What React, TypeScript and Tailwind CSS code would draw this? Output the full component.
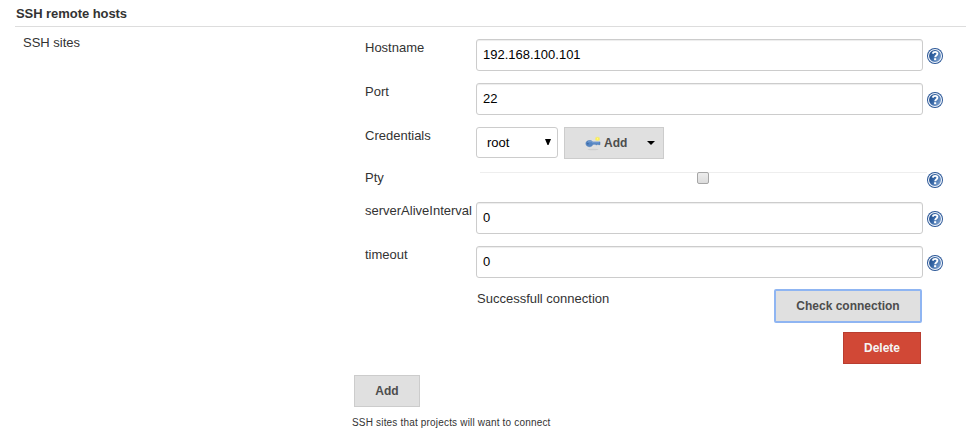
import React from "react";

function HelpIcon() {
  return (
    <svg width="16" height="16" viewBox="0 0 16 16" className="block shrink-0">
      <defs>
        <linearGradient id="help" x1="0" y1="0.2" x2="1" y2="0.8">
          <stop offset="0" stopColor="#204a87" />
          <stop offset="0.4" stopColor="#3465a4" />
          <stop offset="1" stopColor="#86a9d6" />
        </linearGradient>
      </defs>
      <circle cx="8" cy="8" r="8" fill="#2b5797" />
      <circle cx="8" cy="8" r="6.5" fill="url(#help)" stroke="#f0f4fa" strokeWidth="1.1" />
      <path
        d="M5.6 5.6C6 4.4 7 3.9 8.1 3.9c1.4 0 2.3.8 2.3 1.9 0 1.7-2.2 1.7-2.2 3.4"
        fill="none"
        stroke="#fff"
        strokeWidth="1.9"
      />
      <rect x="7.1" y="10.2" width="2.1" height="2" fill="#fff" />
    </svg>
  );
}

function KeyIcon() {
  return (
    <svg width="16" height="16" viewBox="0 0 16 16" className="block shrink-0">
      <defs>
        <radialGradient id="glow">
          <stop offset="0" stopColor="#fffcc0" />
          <stop offset="0.4" stopColor="#fff34d" />
          <stop offset="1" stopColor="#f7e94a" stopOpacity="0.4" />
        </radialGradient>
      </defs>
      <ellipse cx="8" cy="14.5" rx="5.5" ry="0.7" fill="#cfcfcf" />
      <path
        d="M4.5 5.5c1.5 0 2.6.5 3.2 1.400h7.300v2.800h-1.500v-.5h-1.300v.6h-1.400v-.5H8c-.5 1.500-1.800 2.400-3.500 2.400C2.300 11.700.9 10.400.9 8.600S2.300 5.500 4.500 5.500z"
        fill="#5585c2"
        stroke="#4576b4"
        strokeWidth="0.5"
      />
      <path d="M3 6.700h3.800l1 1.100h6.400" stroke="#7fa6d8" strokeWidth="0.8" fill="none" />
      <circle cx="2.900" cy="8.700" r="0.7" fill="#2f5a94" />
      <rect x="10" y="1.800" width="5" height="4.200" rx="1.500" fill="url(#glow)" />
    </svg>
  );
}

function Row({ label, className, labelClass = "pt-px", children }: {
  label: string;
  className: string;
  labelClass?: string;
  children: React.ReactNode;
}) {
  return (
    <div className={`flex items-start ${className}`}>
      <label className={`w-[111px] shrink-0 whitespace-nowrap leading-4 ${labelClass}`}>{label}</label>
      {children}
    </div>
  );
}

function TextField({ label, value }: { label: string; value: string }) {
  return (
    <Row label={label} className="h-11">
      <input
        defaultValue={value}
        className="h-8 w-[447px] rounded-[3px] border border-[#ccc] bg-white px-1.5 pb-0.5 text-black shadow-[inset_0_1px_1px_rgba(0,0,0,0.075)] outline-none"
      />
      <div className="ml-1 mt-[9px]"><HelpIcon /></div>
    </Row>
  );
}

export default function App() {
  return (
    <main className="h-[433px] w-[966px] overflow-hidden bg-white font-['Liberation_Sans',Arial,sans-serif] text-[13px] text-[#333]">
      <h1 className="ml-[15px] h-[27px] border-b border-[#ddd] pl-px pt-1.5 font-bold leading-4 tracking-[-0.06px]">SSH remote hosts</h1>
      <div className="flex">
        <div className="w-[352px] shrink-0 pl-[23px] pt-2 leading-4">SSH sites</div>
        <section className="flex-1 pt-3">
          <div className="pl-[13px]">
            <TextField label="Hostname" value="192.168.100.101" />
            <TextField label="Port" value="22" />
            <Row label="Credentials" className="h-[45px]">
              <button className="flex h-[31px] w-[82px] items-center justify-between rounded-[3px] border border-[#ccc] bg-white pl-2.5 pr-1.5 text-black">
                <span>root</span>
                <svg width="6" height="6" viewBox="0 0 6 6" className="mb-0.5"><path d="M0 0h6L3.5 6h-1z" fill="#000" /></svg>
              </button>
              <button className="ml-1.5 flex h-8 w-[100px] items-center border border-[#ccc] bg-[#e0e0e0] pl-5 text-xs font-bold text-[#4d4d4d]">
                <KeyIcon />
                <span className="ml-[3px]">Add</span>
                <svg width="8" height="4" viewBox="0 0 8 4" className="ml-5"><path d="M0 0h8L4 4z" fill="#000" /></svg>
              </button>
            </Row>
            <Row label="Pty" className="h-[30px]" labelClass="-mt-0.5">
              <div className="ml-1 flex h-3 w-[447px] items-start justify-center border-t border-[#eee] pr-px">
                <input type="checkbox" className="-mt-px size-3 appearance-none rounded-[2px] border border-[#a6a6a6] bg-linear-to-b from-[#ededed] to-[#dcdcdc]" />
              </div>
              <HelpIcon />
            </Row>
            <TextField label="serverAliveInterval" value="0" />
            <TextField label="timeout" value="0" />
            <div className="-mt-px flex h-[43px] w-[557px] items-start justify-between pl-28">
              <span className="pt-0.5 leading-4">Successfull connection</span>
              <button className="h-[34px] w-[148px] rounded-[2px] border-2 border-[#8fb5f2] bg-[#e0e0e0] text-xs font-bold text-[#4d4d4d]">Check connection</button>
            </div>
            <div className="flex h-[43px] w-[556px] items-start justify-end">
              <button className="h-8 w-[78px] border border-[#b93d30] bg-[#d14836] text-xs font-bold text-[#f5f5f5]">Delete</button>
            </div>
          </div>
          <button className="ml-0.5 block h-8 w-[66px] border border-[#ccc] bg-[#e0e0e0] text-xs font-bold text-[#4d4d4d]">Add</button>
          <p className="mt-2 text-[10px] leading-4 tracking-[0.18px]">SSH sites that projects will want to connect</p>
        </section>
      </div>
    </main>
  );
}
